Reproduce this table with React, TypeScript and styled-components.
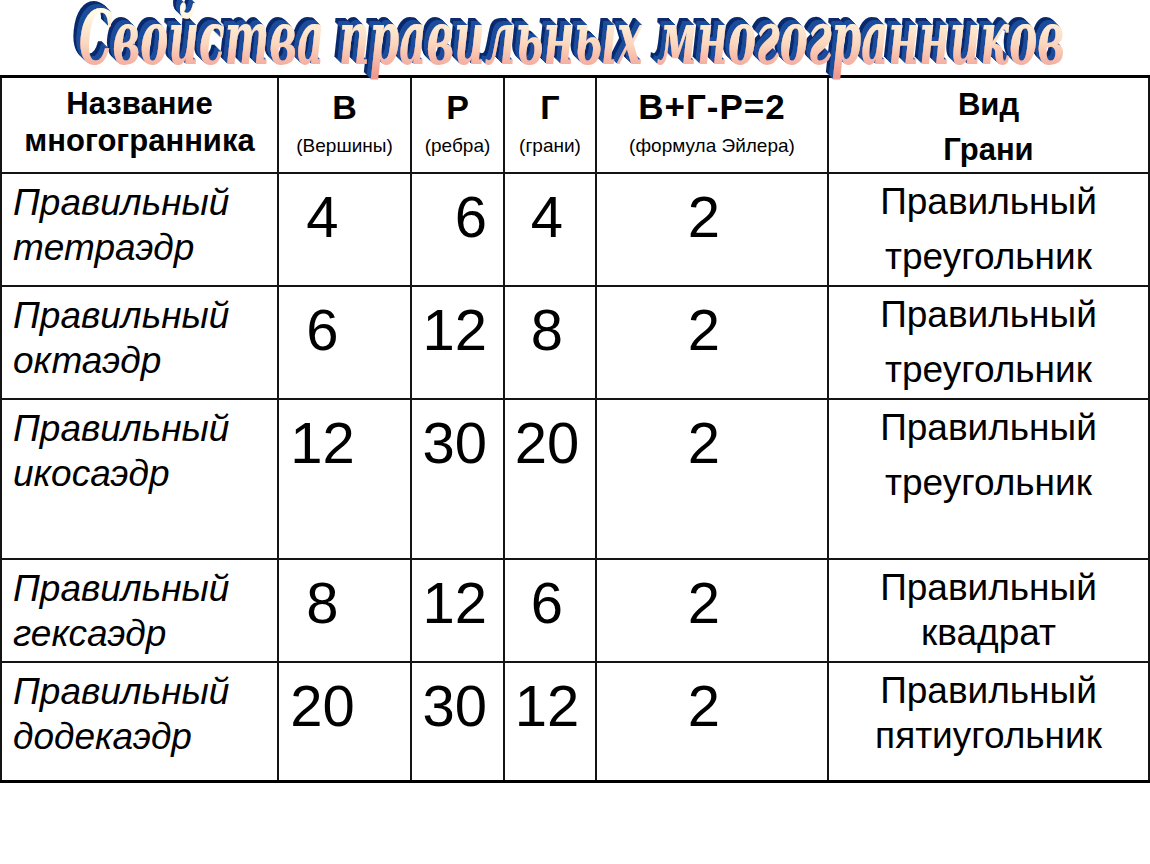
import React from "react";
import styled, { createGlobalStyle } from "styled-components";

const GlobalStyle = createGlobalStyle`
  html, body {
    margin: 0;
    padding: 0;
    background: #ffffff;
  }
  body {
    font-family: "Liberation Sans", Arial, sans-serif;
    color: #000000;
  }
`;

type Align = "left" | "center" | "right";

interface Row {
  name: [string, string];
  v: string;
  e: string;
  f: string;
  face: [string, string];
  height: number;
  spaced: boolean;
}

const rows: Row[] = [
  { name: ["Правильный", "тетраэдр"], v: "4", e: "6", f: "4", face: ["Правильный", "треугольник"], height: 113, spaced: true },
  { name: ["Правильный", "октаэдр"], v: "6", e: "12", f: "8", face: ["Правильный", "треугольник"], height: 113, spaced: true },
  { name: ["Правильный", "икосаэдр"], v: "12", e: "30", f: "20", face: ["Правильный", "треугольник"], height: 160, spaced: true },
  { name: ["Правильный", "гексаэдр"], v: "8", e: "12", f: "6", face: ["Правильный", "квадрат"], height: 103, spaced: false },
  { name: ["Правильный", "додекаэдр"], v: "20", e: "30", f: "12", face: ["Правильный", "пятиугольник"], height: 119, spaced: false },
];

const TITLE = "Свойства правильных многогранников";
const steps = [1, 2, 3, 4, 5, 6, 7];

// WordArt-style title: gradient face with a blue extrusion built by an svg filter
const TitleArt = () => (
  <svg width="1150" height="84" viewBox="0 0 1150 84">
    <defs>
      <linearGradient id="face" gradientUnits="userSpaceOnUse" x1="0" y1="12" x2="0" y2="76">
        <stop offset="0" stopColor="#fffbe6" />
        <stop offset="0.5" stopColor="#fbd6bd" />
        <stop offset="1" stopColor="#f2988e" />
      </linearGradient>
      <filter id="extrude" x="-5%" y="-40%" width="110%" height="180%">
        <feFlood floodColor="#1e4d9c" result="near" />
        <feComposite in="near" in2="SourceAlpha" operator="in" result="nearShape" />
        <feFlood floodColor="#0e2c6e" result="far" />
        <feComposite in="far" in2="SourceAlpha" operator="in" result="farShape" />
        {steps.map((s) => (
          <feOffset
            key={s}
            in={s > 4 ? "farShape" : "nearShape"}
            dx={-s}
            dy={-s}
            result={`o${s}`}
          />
        ))}
        <feMerge>
          {[...steps].reverse().map((s) => (
            <feMergeNode key={s} in={`o${s}`} />
          ))}
          <feMergeNode in="SourceGraphic" />
        </feMerge>
      </filter>
    </defs>
    <ArtText
      x={572}
      y={64}
      textLength={986}
      lengthAdjust="spacingAndGlyphs"
      fill="url(#face)"
      filter="url(#extrude)"
    >
      {TITLE}
    </ArtText>
  </svg>
);

export default function App() {
  return (
    <Page>
      <GlobalStyle />
      <TitleBar>
        <TitleArt />
      </TitleBar>

      <Table>
        <colgroup>
          <col style={{ width: 277 }} />
          <col style={{ width: 133 }} />
          <col style={{ width: 93 }} />
          <col style={{ width: 92 }} />
          <col style={{ width: 232 }} />
          <col style={{ width: 321 }} />
        </colgroup>
        <thead>
          <tr style={{ height: 92 }}>
            <HeadCell $pad={7}>
              <HeadLine $size={31} $lh={37}>Название</HeadLine>
              <HeadLine $size={31} $lh={37}>многогранника</HeadLine>
            </HeadCell>
            <HeadCell $pad={9}>
              <HeadLine $size={34} $lh={40}>В</HeadLine>
              <SubLine>(Вершины)</SubLine>
            </HeadCell>
            <HeadCell $pad={9}>
              <HeadLine $size={34} $lh={40}>Р</HeadLine>
              <SubLine>(ребра)</SubLine>
            </HeadCell>
            <HeadCell $pad={9}>
              <HeadLine $size={34} $lh={40}>Г</HeadLine>
              <SubLine>(грани)</SubLine>
            </HeadCell>
            <HeadCell $pad={9}>
              <HeadLine $size={35} $lh={40} $spacing={1}>В+Г-Р=2</HeadLine>
              <SubLine>(формула Эйлера)</SubLine>
            </HeadCell>
            <HeadCell $pad={4}>
              <HeadLine $size={31} $lh={45}>Вид</HeadLine>
              <HeadLine $size={31} $lh={45}>Грани</HeadLine>
            </HeadCell>
          </tr>
        </thead>
        <tbody>
          {rows.map((r) => (
            <tr key={r.name[1]} style={{ height: r.height }}>
              <NameCell>
                {r.name[0]}
                <br />
                {r.name[1]}
              </NameCell>
              <NumCell $align="center" $padR={44}>{r.v}</NumCell>
              <NumCell $align="right" $padR={16}>{r.e}</NumCell>
              <NumCell $align="center" $padR={6}>{r.f}</NumCell>
              <NumCell $align="center" $padR={16}>2</NumCell>
              <FaceCell>
                <FaceLine>{r.face[0]}</FaceLine>
                <FaceLine $gap={r.spaced ? 10 : 0}>{r.face[1]}</FaceLine>
              </FaceCell>
            </tr>
          ))}
        </tbody>
      </Table>
    </Page>
  );
}

const Page = styled.div`
  width: 1150px;
  min-height: 864px;
  background: #ffffff;
`;

const TitleBar = styled.div`
  position: relative;
  z-index: 1;
  height: 75px;
  overflow: visible;

  svg {
    display: block;
    overflow: visible;
  }
`;

const ArtText = styled.text`
  font-family: "DejaVu Serif", "Liberation Serif", serif;
  font-weight: bold;
  font-style: italic;
  font-size: 74px;
  text-anchor: middle;
`;

const Table = styled.table`
  width: 1148px;
  table-layout: fixed;
  border-collapse: collapse;
  border-top: 3px solid #000;
  border-bottom: 3px solid #000;
  border-left: 2px solid #000;
  border-right: 2px solid #000;

  td,
  th {
    border: 2px solid #141414;
    padding: 0;
    vertical-align: top;
  }
`;

const HeadCell = styled.th<{ $pad: number }>`
  padding-top: ${(p) => p.$pad}px !important;
  text-align: center;
  font-weight: bold;
`;

const HeadLine = styled.div<{ $size: number; $lh: number; $spacing?: number }>`
  font-size: ${(p) => p.$size}px;
  line-height: ${(p) => p.$lh}px;
  letter-spacing: ${(p) => p.$spacing ?? 0}px;
  font-weight: bold;
  white-space: nowrap;
`;

const SubLine = styled.div`
  margin-top: 8px;
  font-size: 19px;
  line-height: 22px;
  font-weight: normal;
  white-space: nowrap;
`;

const NameCell = styled.td`
  padding: 6px 0 0 11px !important;
  font-size: 37px;
  line-height: 45px;
  font-style: italic;
  white-space: nowrap;
`;

const NumCell = styled.td<{ $align: Align; $padR: number }>`
  padding-top: 11px !important;
  padding-right: ${(p) => p.$padR}px !important;
  text-align: ${(p) => p.$align};
  font-size: 58px;
  line-height: 64px;
`;

const FaceCell = styled.td`
  padding-top: 5px !important;
  text-align: center;
  font-size: 37px;
  line-height: 45px;
  white-space: nowrap;
`;

const FaceLine = styled.div<{ $gap?: number }>`
  margin-top: ${(p) => p.$gap ?? 0}px;
`;
